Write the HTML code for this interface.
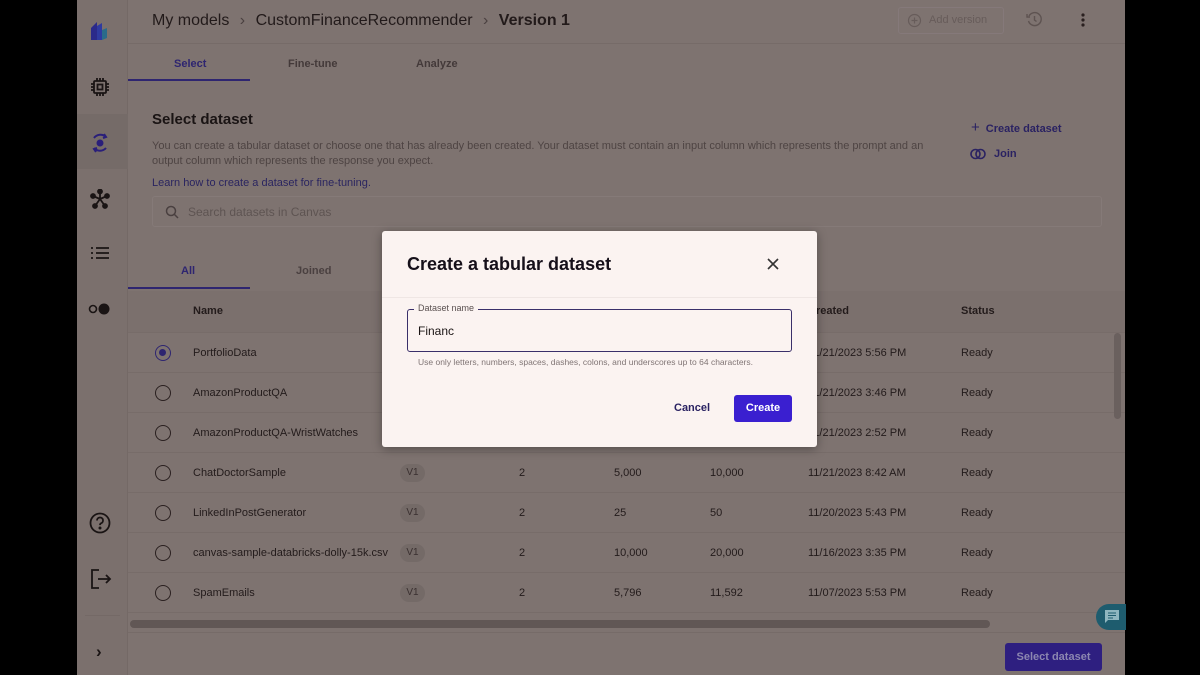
<!DOCTYPE html>
<html><head><meta charset="utf-8"><style>
*{margin:0;padding:0;box-sizing:border-box}
body{width:1200px;height:675px;background:#000;font-family:"Liberation Sans",sans-serif;position:relative;overflow:hidden;color:#1a1414}
.app{position:absolute;left:77px;top:0;width:1048px;height:675px;background:#7e7370}
.side{position:absolute;left:0;top:0;width:51px;height:675px;background:#7b706d;border-right:1px solid #746966}
.a{position:absolute;white-space:nowrap}
.row{position:absolute;left:51px;width:997px;height:40px;border-bottom:1px solid #776c69}
.radio{position:absolute;left:27px;top:12px;width:16px;height:16px;border:1.5px solid #2a2020;border-radius:50%}
.cell{position:absolute;top:14px;font-size:11px;color:#231b1b}
.v1{position:absolute;left:272px;top:11px;width:25px;height:18px;border-radius:9px;background:#746a67;font-size:10px;color:#3a3030;text-align:center;line-height:18px}
</style></head><body>
<div class="app">
 <div class="side">
  <svg class="a" style="left:12px;top:20px" width="20" height="22" viewBox="0 0 20 22"><path d="M2 8 L8 2 L8 20 L2 20Z" fill="#2b2a8a"/><path d="M8 6 L13 3 L13 20 L8 20Z" fill="#2f3aa0"/><path d="M13 10 L18 8 L18 18 L13 20Z" fill="#2a6b8a"/></svg>
  <svg class="a" style="left:13px;top:77px" width="20" height="20" viewBox="0 0 20 20" fill="none" stroke="#1a1414" stroke-width="1.8"><rect x="4" y="4" width="12" height="12" rx="1"/><rect x="7.5" y="7.5" width="5" height="5"/><path d="M7 1v3M10 1v3M13 1v3M7 16v3M10 16v3M13 16v3M1 7h3M1 10h3M1 13h3M16 7h3M16 10h3M16 13h3"/></svg>
  <div class="a" style="left:0;top:114px;width:51px;height:55px;background:#756b68"></div>
  <svg class="a" style="left:13px;top:132px" width="20" height="22" viewBox="0 0 20 22" fill="none" stroke="#2a1f7a" stroke-width="2"><path d="M4 6 A8 8 0 0 1 16 5"/><path d="M16 16 A8 8 0 0 1 4 16"/><path d="M14 2l2 3-3 1M6 20l-2-3 3-1"/><circle cx="10" cy="11" r="2.5" fill="#2a1f7a"/></svg>
  <svg class="a" style="left:13px;top:189px" width="20" height="20" viewBox="0 0 20 20" fill="#1a1414" stroke="#1a1414" stroke-width="1.8"><path d="M10 10L10 2M10 10L3 7M10 10L17 7M10 10L5 17M10 10L15 17"/><circle cx="10" cy="2.5" r="2"/><circle cx="3" cy="7" r="2"/><circle cx="17" cy="7" r="2"/><circle cx="5" cy="17" r="2"/><circle cx="15" cy="17" r="2"/></svg>
  <svg class="a" style="left:13px;top:246px" width="20" height="14" viewBox="0 0 20 14" stroke="#1a1414" stroke-width="1.8"><path d="M1 2h2M6 2h13M1 7h2M6 7h13M1 12h2M6 12h13"/></svg>
  <svg class="a" style="left:10px;top:302px" width="26" height="14" viewBox="0 0 26 14"><circle cx="6" cy="7" r="3.5" fill="none" stroke="#1a1414" stroke-width="1.6"/><circle cx="17" cy="7" r="5.5" fill="#1a1414"/></svg>
  <svg class="a" style="left:12px;top:512px" width="22" height="22" viewBox="0 0 22 22" fill="none" stroke="#1a1414" stroke-width="1.8"><circle cx="11" cy="11" r="9.5"/><path d="M8 8.5a3 3 0 1 1 4 2.8c-.8.4-1 .9-1 1.8"/><circle cx="11" cy="16" r=".6" fill="#1a1414"/></svg>
  <svg class="a" style="left:13px;top:568px" width="22" height="22" viewBox="0 0 22 22" fill="none" stroke="#1a1414" stroke-width="1.8"><path d="M9 2H2v18h7M8 11h12M16 7l4 4-4 4"/></svg>
  <div class="a" style="left:8px;top:615px;width:35px;border-top:1px solid #746966"></div>
  <div class="a" style="left:19px;top:642px;font-size:17px;font-weight:bold">›</div>
 </div>
 <div class="a" style="left:51px;top:43px;width:997px;border-top:1px solid #766b68"></div>
 <div class="a" style="left:75px;top:12px;font-size:16px;color:#221a1a">My models <span style="color:#4a4040;margin:0 6px">›</span> CustomFinanceRecommender <span style="color:#4a4040;margin:0 6px">›</span> <b>Version 1</b></div>
 <div class="a" style="left:821px;top:7px;width:106px;height:27px;border:1px solid #85797a;border-radius:3px;font-size:11px;color:#675c5a;line-height:25px;padding-left:30px">Add version</div>
 <svg class="a" style="left:830px;top:13px" width="15" height="15" viewBox="0 0 15 15" fill="none" stroke="#675c5a" stroke-width="1.2"><circle cx="7.5" cy="7.5" r="6"/><path d="M7.5 4.5v6M4.5 7.5h6"/></svg>
 <svg class="a" style="left:949px;top:11px" width="17" height="17" viewBox="0 0 17 17" fill="none" stroke="#5e5351" stroke-width="1.4"><path d="M3 5A6.5 6.5 0 1 1 2.5 10"/><path d="M1 3v3h3M8.5 5v4l2 1.5"/></svg>
 <svg class="a" style="left:1003px;top:12px" width="6" height="16"><circle cx="3" cy="3" r="1.6" fill="#2a2020"/><circle cx="3" cy="8" r="1.6" fill="#2a2020"/><circle cx="3" cy="13" r="1.6" fill="#2a2020"/></svg>
 <div class="a" style="left:97px;top:58px;font-size:11px;font-weight:bold;color:#2e2570">Select</div>
 <div class="a" style="left:51px;top:79px;width:122px;height:2px;background:#2e2570"></div>
 <div class="a" style="left:211px;top:58px;font-size:11px;font-weight:bold;color:#443a3a">Fine-tune</div>
 <div class="a" style="left:339px;top:58px;font-size:11px;font-weight:bold;color:#443a3a">Analyze</div>
 <div class="a" style="left:75px;top:111px;font-size:15px;font-weight:bold;color:#1a1414">Select dataset</div>
 <div class="a" style="left:75px;top:139px;font-size:11px;color:#4e4443;line-height:15px;white-space:normal;width:790px">You can create a tabular dataset or choose one that has already been created. Your dataset must contain an input column which represents the prompt and an output column which represents the response you expect.</div>
 <div class="a" style="left:75px;top:177px;font-size:11px;color:#2a2560">Learn how to create a dataset for fine-tuning.</div>
 <div class="a" style="left:894px;top:119px;font-size:11px;font-weight:bold;color:#2a2262"><span style="font-size:15px;font-weight:normal;margin-right:6px">+</span>Create dataset</div>
 <svg class="a" style="left:893px;top:148px" width="16" height="12" viewBox="0 0 16 12" fill="none" stroke="#2a2262" stroke-width="1.6"><circle cx="5.5" cy="6" r="4.5"/><circle cx="10.5" cy="6" r="4.5"/></svg>
 <div class="a" style="left:917px;top:148px;font-size:11px;font-weight:bold;color:#2a2262">Join</div>
 <div class="a" style="left:75px;top:196px;width:950px;height:31px;border:1px solid #857a78;border-radius:3px;font-size:12px;color:#5e5452;line-height:31px;padding-left:35px">Search datasets in Canvas</div>
 <svg class="a" style="left:88px;top:205px" width="14" height="14" viewBox="0 0 14 14" fill="none" stroke="#4a4040" stroke-width="1.5"><circle cx="6" cy="6" r="4.5"/><path d="M9.5 9.5L13 13"/></svg>
 <div class="a" style="left:104px;top:265px;font-size:11px;font-weight:bold;color:#2e2570">All</div>
 <div class="a" style="left:51px;top:287px;width:122px;height:2px;background:#2e2570"></div>
 <div class="a" style="left:219px;top:265px;font-size:11px;font-weight:bold;color:#4a4040">Joined</div>
 <div class="row" style="top:291px;height:42px;background:#7b706d"><div class="cell" style="left:65px;top:14px;font-weight:bold">Name</div><div class="cell" style="left:680px;top:14px;font-weight:bold">Created</div><div class="cell" style="left:833px;top:14px;font-weight:bold">Status</div></div>
 <div class="row" style="top:333px"><div class="radio" style="border-color:#2e2570"><div style="position:absolute;left:3px;top:3px;width:7px;height:7px;border-radius:50%;background:#2e2570"></div></div><div class="cell" style="left:65px">PortfolioData</div><div class="cell" style="left:680px">11/21/2023 5:56 PM</div><div class="cell" style="left:833px">Ready</div></div>
 <div class="row" style="top:373px"><div class="radio"></div><div class="cell" style="left:65px">AmazonProductQA</div><div class="cell" style="left:680px">11/21/2023 3:46 PM</div><div class="cell" style="left:833px">Ready</div></div>
 <div class="row" style="top:413px"><div class="radio"></div><div class="cell" style="left:65px">AmazonProductQA-WristWatches</div><div class="cell" style="left:680px">11/21/2023 2:52 PM</div><div class="cell" style="left:833px">Ready</div></div>
 <div class="row" style="top:453px"><div class="radio"></div><div class="cell" style="left:65px">ChatDoctorSample</div><div class="v1">V1</div><div class="cell" style="left:391px">2</div><div class="cell" style="left:486px">5,000</div><div class="cell" style="left:582px">10,000</div><div class="cell" style="left:680px">11/21/2023 8:42 AM</div><div class="cell" style="left:833px">Ready</div></div>
 <div class="row" style="top:493px"><div class="radio"></div><div class="cell" style="left:65px">LinkedInPostGenerator</div><div class="v1">V1</div><div class="cell" style="left:391px">2</div><div class="cell" style="left:486px">25</div><div class="cell" style="left:582px">50</div><div class="cell" style="left:680px">11/20/2023 5:43 PM</div><div class="cell" style="left:833px">Ready</div></div>
 <div class="row" style="top:533px"><div class="radio"></div><div class="cell" style="left:65px">canvas-sample-databricks-dolly-15k.csv</div><div class="v1">V1</div><div class="cell" style="left:391px">2</div><div class="cell" style="left:486px">10,000</div><div class="cell" style="left:582px">20,000</div><div class="cell" style="left:680px">11/16/2023 3:35 PM</div><div class="cell" style="left:833px">Ready</div></div>
 <div class="row" style="top:573px"><div class="radio"></div><div class="cell" style="left:65px">SpamEmails</div><div class="v1">V1</div><div class="cell" style="left:391px">2</div><div class="cell" style="left:486px">5,796</div><div class="cell" style="left:582px">11,592</div><div class="cell" style="left:680px">11/07/2023 5:53 PM</div><div class="cell" style="left:833px">Ready</div></div>
 <div class="a" style="left:1037px;top:333px;width:7px;height:86px;border-radius:4px;background:#6a605e"></div>
 <div class="a" style="left:53px;top:620px;width:860px;height:8px;border-radius:4px;background:#615755"></div>
 <div class="a" style="left:51px;top:632px;width:997px;border-top:1px solid #766b68"></div>
 <div class="a" style="left:928px;top:643px;width:97px;height:28px;border-radius:3px;background:#2e1f80;color:#8c87b0;font-size:11px;font-weight:bold;text-align:center;line-height:28px">Select dataset</div>
 <div class="a" style="left:1019px;top:604px;width:30px;height:26px;border-radius:13px 0 0 13px;background:#1e5c6e"></div>
 <svg class="a" style="left:1027px;top:609px" width="16" height="15" viewBox="0 0 16 15"><path d="M1 1h14v10H4l-3 3z" fill="#8fb7c0"/><path d="M4 4h8M4 6.5h8M4 9h5" stroke="#1e5c6e" stroke-width="1"/></svg>
</div>
<div class="a" style="left:382px;top:231px;width:435px;height:216px;background:#fbf3f1;border-radius:3px;box-shadow:0 2px 10px rgba(0,0,0,.35)">
 <div class="a" style="left:25px;top:23px;font-size:18px;font-weight:bold;color:#16101a">Create a tabular dataset</div>
 <svg class="a" style="left:384px;top:26px" width="14" height="14" viewBox="0 0 14 14" stroke="#333" stroke-width="1.6"><path d="M2 2l10 10M12 2L2 12"/></svg>
 <div class="a" style="left:0;top:66px;width:435px;border-top:1px solid #efe6e4"></div>
 <div class="a" style="left:25px;top:78px;width:385px;height:43px;border:1.5px solid #3a2f6a;border-radius:3px"></div>
 <div class="a" style="left:32px;top:72px;background:#fbf3f1;padding:0 4px;font-size:9px;color:#5a5050">Dataset name</div>
 <div class="a" style="left:36px;top:93px;font-size:12px;color:#1a1414">Financ</div>
 <div class="a" style="left:36px;top:126px;font-size:8.5px;color:#807575">Use only letters, numbers, spaces, dashes, colons, and underscores up to 64 characters.</div>
 <div class="a" style="left:292px;top:171px;font-size:11px;font-weight:bold;color:#2a2262">Cancel</div>
 <div class="a" style="left:352px;top:164px;width:58px;height:27px;border-radius:3px;background:#3a1fd0;color:#fff;font-size:11px;font-weight:bold;text-align:center;line-height:27px">Create</div>
</div>
</body></html>
